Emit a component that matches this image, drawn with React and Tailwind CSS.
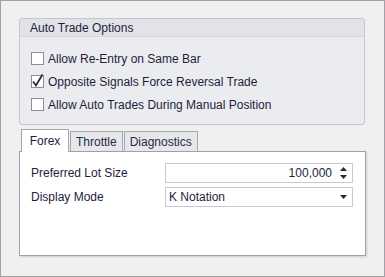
import { useState } from "react";

const font = { fontFamily: '"Liberation Sans", Arial, sans-serif' };

function CheckRow({ label, checked }) {
    return (
        <div className="flex items-center h-[23px]">
            <div className="w-[13px] h-[13px] border border-[#8e8f96] bg-white flex items-center justify-center">
                {checked && (
                    <svg width="13" height="13" viewBox="0 0 13 13" className="overflow-visible">
                        <path d="M2 6.5 L5 10.5 L11.5 -0.5" fill="none" stroke="#2b2b33" strokeWidth="1.8" />
                    </svg>
                )}
            </div>
            <span className="ml-[4px] text-[12px] text-[#1e1e3a] leading-none">{label}</span>
        </div>
    );
}

export default function App() {
    const [tab, setTab] = useState("Forex");
    const tabs = ["Forex", "Throttle", "Diagnostics"];

    return (
        <div style={font} className="w-[385px] h-[277px] border border-[#a0a0a8] bg-[#f0f0f0] pl-[18px] pt-[17px]">
            {/* group box */}
            <div className="w-[346px] h-[107px] border border-[#c5c6cd] rounded-[3px] bg-[#ebecf0] overflow-hidden">
                <div className="h-[18px] bg-[#e2e3e8] border-b border-[#d6d7dc] pl-[10px] flex items-center text-[12px] text-[#1e1e3a]">
                    Auto Trade Options
                </div>
                <div className="pl-[11px] pt-[10px]">
                    <CheckRow label="Allow Re-Entry on Same Bar" />
                    <CheckRow label="Opposite Signals Force Reversal Trade" checked />
                    <CheckRow label="Allow Auto Trades During Manual Position" />
                </div>
            </div>

            {/* tabs */}
            <div className="mt-[4px] flex items-end h-[23px] pl-[2px] relative z-10">
                {tabs.map((t) =>
                    t === tab ? (
                        <div key={t} onClick={() => setTab(t)} className="h-[23px] w-[48px] bg-white border border-b-0 border-[#a5a6ae] flex items-center justify-center text-[12px] text-[#1e1e3a]">
                            {t}
                        </div>
                    ) : (
                        <div key={t} onClick={() => setTab(t)} className="h-[20px] ml-[1px] mb-[1px] px-[5px] bg-[#e6e7eb] border border-b-0 border-[#a5a6ae] flex items-center justify-center text-[12px] text-[#2a2a44]">
                            {t}
                        </div>
                    )
                )}
            </div>

            {/* panel */}
            <div className="-mt-[1px] w-[347px] h-[105px] bg-white border border-[#a0a0a8] shadow-[1px_1px_2px_rgba(0,0,0,0.15)] pl-[11px] pr-[12px] pt-[11px]">
                <div className="flex items-center h-[20px]">
                    <span className="w-[134px] text-[12px] text-[#1e1e3a]">Preferred Lot Size</span>
                    <div className="flex-1 h-[20px] border border-[#c9cad1] flex items-center justify-end pr-[4px] text-[12px] text-[#1e1e3a]">
                        <span className="mr-[7px]">100,000</span>
                        <svg width="9" height="14" viewBox="0 0 9 14">
                            <path d="M4.5 1 L8 5 L1 5 Z" fill="#2a2a33" />
                            <path d="M1 9 L8 9 L4.5 13 Z" fill="#2a2a33" />
                        </svg>
                    </div>
                </div>
                <div className="flex items-center h-[20px] mt-[4px]">
                    <span className="w-[134px] text-[12px] text-[#1e1e3a]">Display Mode</span>
                    <div className="flex-1 h-[20px] border border-[#c9cad1] flex items-center justify-between pl-[3px] pr-[4px] text-[12px] text-[#1e1e3a]">
                        <span>K Notation</span>
                        <svg width="9" height="6" viewBox="0 0 9 6">
                            <path d="M1 1 L8 1 L4.5 5 Z" fill="#2a2a33" />
                        </svg>
                    </div>
                </div>
            </div>
        </div>
    );
}
